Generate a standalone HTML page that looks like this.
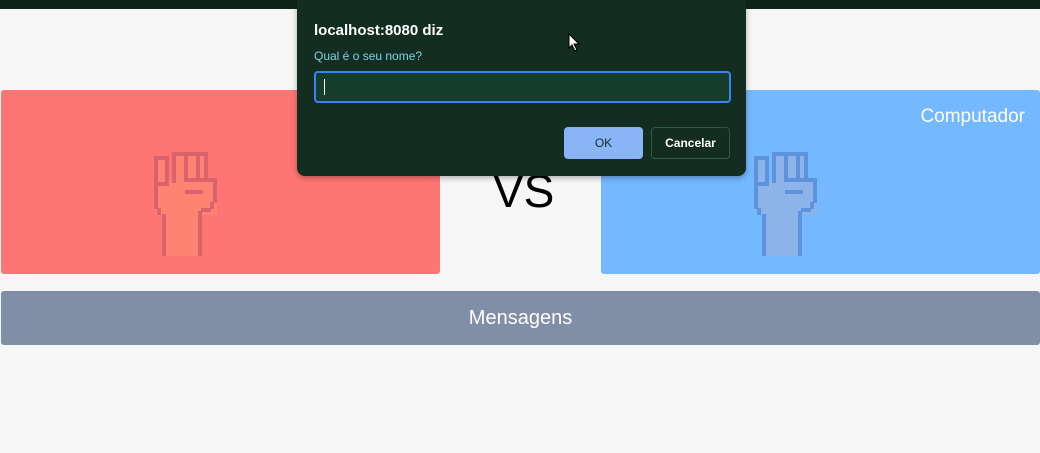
<!DOCTYPE html>
<html><head><meta charset="utf-8"><style>
body{margin:0;width:1040px;height:453px;background:#f6f6f6;position:relative;overflow:hidden;font-family:"Liberation Sans",Arial,sans-serif}
.top{position:absolute;left:0;top:0;width:1040px;height:9px;background:#0f2418}
.panel{position:absolute;top:90px;height:184px;border-radius:3px}
.red{left:1px;width:439px;background:#ff7573}
.blue{left:601px;width:439px;background:#74b8ff}
.vs{position:absolute;left:493px;top:164px;font-size:46px;color:#000}
.msg{position:absolute;left:1px;top:291px;width:1039px;height:54px;background:#808ea6;border-radius:3px;color:#fff;font-size:20px;text-align:center;line-height:54px}
.dlg{position:absolute;left:297px;top:0;width:449px;height:176px;background:#132d20;border-radius:0 0 8px 8px;box-shadow:0 2px 6px rgba(0,0,0,.3)}
.dlg .t{position:absolute;left:17px;top:22px;color:#fff;font-weight:bold;font-size:15px}
.dlg .q{position:absolute;left:17px;top:49px;color:#7fd3e8;font-size:12px}
.inp{position:absolute;left:17px;top:71px;width:413px;height:28px;background:#153d2b;border:2px solid #3b82f6;border-radius:4px;box-sizing:content-box}
.inp i{position:absolute;left:8px;top:6px;width:1px;height:16px;background:#fff}
.ok{position:absolute;left:267px;top:127px;width:79px;height:32px;background:#8ab4f8;border-radius:4px;color:#132d20;font-size:12px;text-align:center;line-height:32px}
.cn{position:absolute;left:354px;top:127px;width:77px;height:30px;border:1px solid #2f5a44;border-radius:4px;color:#fff;font-size:12px;font-weight:bold;text-align:center;line-height:30px}
svg{position:absolute}
</style></head><body>
<div class="top"></div>
<div class="panel red"></div>
<div class="panel blue"><div style="position:absolute;right:15px;top:16px;color:#fff;font-size:19px">Computador</div></div>
<svg style="left:153px;top:151px" width="67" height="105" viewBox="0 0 67 105">
<g fill="#ff8373"><rect x="3" y="8" width="11" height="27"/><rect x="20" y="3" width="34" height="28"/><rect x="3" y="30" width="61" height="34"/><rect x="12" y="60" width="36" height="45"/></g>
<g fill="#d9626b"><rect x="1" y="5" width="4" height="53"/><rect x="1" y="5" width="13" height="4"/><rect x="12" y="5" width="4" height="30"/><rect x="4" y="31" width="12" height="4"/>
<rect x="19" y="1" width="36" height="4"/><rect x="19" y="1" width="4" height="31"/><rect x="31" y="1" width="4" height="29"/><rect x="43" y="1" width="4" height="29"/><rect x="51" y="1" width="4" height="29"/><rect x="31" y="27" width="33" height="4"/><rect x="60" y="27" width="4" height="25"/><rect x="32" y="39" width="18" height="4"/><rect x="57" y="51" width="4" height="7"/><rect x="4" y="57" width="4" height="7"/><rect x="9" y="63" width="4" height="42"/><rect x="45" y="60" width="4" height="45"/><rect x="48" y="57" width="10" height="4"/></g>
</svg>
<svg style="left:753px;top:151px" width="67" height="105" viewBox="0 0 67 105">
<g fill="#8db4e8"><rect x="3" y="8" width="11" height="27"/><rect x="20" y="3" width="34" height="28"/><rect x="3" y="30" width="61" height="34"/><rect x="12" y="60" width="36" height="45"/></g>
<g fill="#5f92dc"><rect x="1" y="5" width="4" height="53"/><rect x="1" y="5" width="13" height="4"/><rect x="12" y="5" width="4" height="30"/><rect x="4" y="31" width="12" height="4"/>
<rect x="19" y="1" width="36" height="4"/><rect x="19" y="1" width="4" height="31"/><rect x="31" y="1" width="4" height="29"/><rect x="43" y="1" width="4" height="29"/><rect x="51" y="1" width="4" height="29"/><rect x="31" y="27" width="33" height="4"/><rect x="60" y="27" width="4" height="25"/><rect x="32" y="39" width="18" height="4"/><rect x="57" y="51" width="4" height="7"/><rect x="4" y="57" width="4" height="7"/><rect x="9" y="63" width="4" height="42"/><rect x="45" y="60" width="4" height="45"/><rect x="48" y="57" width="10" height="4"/></g>
</svg>
<div class="vs">VS</div>
<div class="msg">Mensagens</div>
<div class="dlg">
<div class="t">localhost:8080 diz</div>
<div class="q">Qual é o seu nome?</div>
<div class="inp"><i></i></div>
<div class="ok">OK</div>
<div class="cn">Cancelar</div>
</div>
<svg style="left:568px;top:33px" width="14" height="20" viewBox="0 0 14 20"><path d="M1 1 L1 15 L4 12 L7 18 L9 17 L6 11 L11 11 Z" fill="#fff" stroke="#000" stroke-width="1"/></svg>
</body></html>
